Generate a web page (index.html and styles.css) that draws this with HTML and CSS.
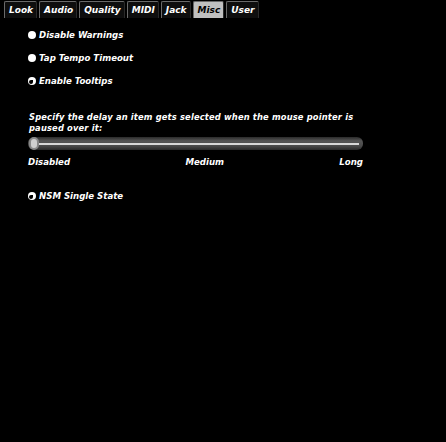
FILE: index.html
```html
<!DOCTYPE html>
<html>
<head>
<meta charset="utf-8">
<link rel="stylesheet" href="styles.css">
</head>
<body>
<div class="tabs">
  <div class="tab">Look</div>
  <div class="tab">Audio</div>
  <div class="tab">Quality</div>
  <div class="tab">MIDI</div>
  <div class="tab">Jack</div>
  <div class="tab active">Misc</div>
  <div class="tab">User</div>
</div>
<div class="panel">
  <div class="opt"><span class="radio"></span>Disable Warnings</div>
  <div class="opt"><span class="radio"></span>Tap Tempo Timeout</div>
  <div class="opt"><span class="radio on"></span>Enable Tooltips</div>
  <div class="desc">Specify the delay an item gets selected when the mouse pointer is paused over it:</div>
  <div class="slider"><span class="line"></span><span class="knob"></span></div>
  <div class="scale"><span>Disabled</span><span>Medium</span><span>Long</span></div>
  <div class="opt nsm"><span class="radio on"></span>NSM Single State</div>
</div>
</body>
</html>
```
FILE: styles.css
```css
html, body {
  margin: 0;
  padding: 0;
  background: #000;
  height: 100%;
}
body {
  font-family: "DejaVu Sans", sans-serif;
  font-weight: bold;
  font-style: italic;
  font-size: 8.6px;
  color: #fff;
}
.tabs {
  display: flex;
  gap: 2px;
  padding: 1px 0 0 4px;
}
.tab {
  height: 17px;
  line-height: 16px;
  padding: 0 3px 0 4px;
  font-size: 9px;
  background: #0e0e0e;
  border-top: 1px solid #6a6a6a;
  border-left: 1px solid #6a6a6a;
  border-right: 1px solid #2a2a2a;
  box-sizing: border-box;
  border-radius: 2px 2px 0 0;
}
.tab.active {
  background: #c0c0c0;
  color: #000;
}
.panel {
  padding: 0 0 0 28px;
  width: 336px;
}
.opt {
  display: flex;
  align-items: center;
  height: 23px;
  gap: 3px;
}
.opt:first-child {
  margin-top: 5px;
}
.radio {
  width: 8px;
  height: 8px;
  border-radius: 50%;
  background: #fff;
  position: relative;
  flex: none;
}
.radio.on::after {
  content: "";
  position: absolute;
  left: 1px;
  top: 3px;
  width: 4px;
  height: 4px;
  border-radius: 50% 0 50% 50%;
  background: #000;
}
.desc {
  margin-top: 20px;
  line-height: 11px;
  width: 340px;
  font-size: 8.3px;
  letter-spacing: 0.18px;
  padding-left: 1px;
}
.slider {
  position: relative;
  margin-top: 3px;
  height: 13px;
  width: 335px;
  border-radius: 6px;
  background: linear-gradient(#2a2a2a, #555 30%, #4a4a4a 70%, #2a2a2a);
}
.line {
  position: absolute;
  left: 8px;
  right: 4px;
  top: 6px;
  height: 2px;
  background: #d8d8d8;
}
.knob {
  position: absolute;
  left: 1px;
  top: 0;
  width: 10px;
  height: 13px;
  border-radius: 5px;
  background: #cfcfcf;
  box-sizing: border-box;
  border: 2px solid #888;
}
.scale {
  display: flex;
  justify-content: space-between;
  width: 335px;
  margin-top: 7px;
  line-height: 11px;
}
.nsm {
  margin-top: 16px;
}
```
